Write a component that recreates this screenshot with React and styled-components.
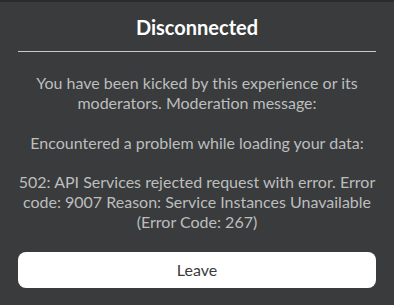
import React from 'react'
import styled, { createGlobalStyle } from 'styled-components'

const GlobalStyle = createGlobalStyle`
  html, body {
    margin: 0;
    padding: 0;
    background: #393b3d;
  }
  body {
    font-family: Lato, "Noto Sans", sans-serif;
  }
`

const Panel = styled.div`
  box-sizing: border-box;
  width: 394px;
  height: 305px;
  background: #393b3d;
  border-top: 2px solid #2a2c2e;
  padding: 0 18px;
  display: flex;
  flex-direction: column;
`

const Title = styled.h1`
  margin: 0;
  height: 49px;
  display: flex;
  align-items: center;
  justify-content: center;
  font-size: 20px;
  font-weight: 700;
  color: #ffffff;
`

const Divider = styled.hr`
  margin: 0;
  border: 0;
  height: 1px;
  background: #c8c9ca;
`

const Body = styled.div`
  padding: 21px 0 0;
  display: flex;
  flex-direction: column;
  gap: 19px;
`

const Paragraph = styled.p`
  margin: 0;
  text-align: center;
  font-size: 16px;
  line-height: 20.3px;
  color: #bdbebe;
`

const LeaveButton = styled.button`
  margin-top: 19px;
  height: 36px;
  border: 0;
  border-radius: 8px;
  background: #ffffff;
  color: #393b3d;
  font-family: inherit;
  font-size: 16px;
  cursor: pointer;
`

export default function App() {
  return (
    <>
      <GlobalStyle />
      <Panel>
        <Title>Disconnected</Title>
        <Divider />
        <Body>
          <Paragraph>
            You have been kicked by this experience or its moderators. Moderation message:
          </Paragraph>
          <Paragraph>Encountered a problem while loading your data:</Paragraph>
          <Paragraph>
            502: API Services rejected request with error. Error code: 9007 Reason: Service
            Instances Unavailable (Error Code: 267)
          </Paragraph>
        </Body>
        <LeaveButton>Leave</LeaveButton>
      </Panel>
    </>
  )
}
